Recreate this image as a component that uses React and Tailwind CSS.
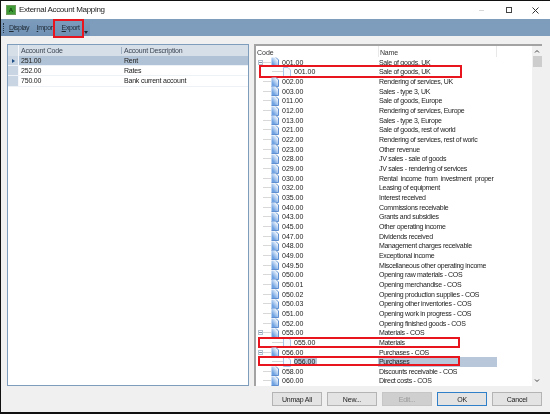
const accounts = [["251.00","Rent",true],["252.00","Rates"],["750.00","Bank current account"]];
const rows = [
["001.00","Sale of goods, UK","p"],["001.00","Sale of goods, UK","c","a"],["002.00","Rendering of services, UK"],["003.00","Sales - type 3, UK"],["011.00","Sale of goods, Europe"],["012.00","Rendering of services, Europe"],["013.00","Sales - type 3, Europe"],["021.00","Sale of goods, rest of world"],["022.00","Rendering of services, rest of worlc"],["023.00","Other revenue"],["028.00","JV sales - sale of goods"],["029.00","JV sales - rendering of services"],["030.00","Rental  income  from  investment  proper"],["032.00","Leasing of equipment"],["035.00","Interest received"],["040.00","Commissions receivable"],["043.00","Grants and subsidies"],["045.00","Other operating income"],["047.00","Dividends received"],["048.00","Management charges receivable"],["049.00","Exceptional income"],["049.50","Miscellaneous other operating income"],["050.00","Opening raw materials - COS"],["050.01","Opening merchandise - COS"],["050.02","Opening production supplies - COS"],["050.03","Opening other inventories - COS"],["051.00","Opening work in progress - COS"],["052.00","Opening finished goods - COS"],["055.00","Materials - COS","p"],["055.00","Materials","c","b"],["056.00","Purchases - COS","p"],["056.00","Purchases","c","c"],["058.00","Discounts receivable - COS"],["060.00","Direct costs - COS"]];

function Doc({ pale }) {
  return (
    <svg width="8" height="10" viewBox="0 0 8 10" className="shrink-0">
      <defs>
        <linearGradient id="docfill" x1="1" y1="0" x2="0" y2="1">
          <stop offset="0.2" stopColor="#f2f7fd" />
          <stop offset="0.75" stopColor="#6fa2e2" />
        </linearGradient>
      </defs>
      {pale ? (
        <path d="M0.5 0.5H5L7.5 3V9.5H0.5Z" fill="#f6f9fd" stroke="#a9c4e6" strokeWidth="1" />
      ) : (
        <>
          <path d="M0.5 0.5H5L7.5 3V9.5H0.5Z" fill="url(#docfill)" />
          <path d="M5 0.5L7.5 3V9.5H0.5" fill="none" stroke="#5f8fd0" strokeWidth="1" />
        </>
      )}
    </svg>
  );
}

function Row({ r }) {
  const [code, name, kind, box] = r;
  const sel = box === "c";
  return (
    <div className="relative flex h-[9.667px] items-center">
      <div className="flex w-[122px] shrink-0 items-center">
        {kind === "c" ? (
          <div className="flex items-center">
            <div className="ml-[16px] w-[11px] border-b border-[#d8d8d8]" />
            <Doc pale />
            <span className={"ml-[3px] " + (sel ? "bg-[#b8c8da] pr-[2px]" : "")}>{code}</span>
          </div>
        ) : (
          <div className="flex items-center">
            {kind === "p" ? (
              <div className="ml-[2px] flex h-[5px] w-[5px] items-center justify-center border border-[#b4c2d2] bg-white">
                <div className="h-px w-[3px] bg-[#8496aa]" />
              </div>
            ) : (
              <div className="ml-[2px] w-[5px]" />
            )}
            <div className="w-[8px] border-b border-[#d8d8d8]" />
            <Doc />
            <span className="ml-[3px]">{code}</span>
          </div>
        )}
      </div>
      <div className={"flex h-full w-[119px] shrink-0 items-center whitespace-pre pl-[1px] tracking-[-0.3px] " + (sel ? "bg-[#b8c8da]" : "")}>{name}</div>
      {box && <div className={"absolute border-2 border-[#e8141e] " + (box === "a" ? "left-[3px] right-[70px] -top-[2px] h-[13px]" : box === "b" ? "left-[2px] right-[72px] -top-[1px] h-[11px]" : "left-[2px] right-[72px] -top-[1px] h-[10px]")} />}
    </div>
  );
}

function Btn({ children, disabled, primary }) {
  return (
    <div className={"flex h-[14px] w-[50px] items-center justify-center border text-[7px] tracking-[-0.2px] " + (primary ? "border-[#2f7fc9] bg-[#e3e3e3]" : disabled ? "border-[#c6c6c6] bg-[#cfcfcf] text-[#9a9a9a]" : "border-[#b4b4b4] bg-[#e3e3e3]")}>{children}</div>
  );
}

export default function App() {
  return (
    <div className="flex h-[414px] w-[550px] flex-col overflow-hidden border-t border-l border-b-2 border-[#111] bg-[#f0f0f0] text-[7px] leading-none text-[#222] [font-family:'Liberation_Sans',sans-serif] blur-[0.25px]">
      <div className="flex h-[18px] shrink-0 items-center bg-white pl-[5px] pr-[11px]">
        <div className="flex h-[10px] w-[10px] items-center justify-center border border-[#6c9a5a] bg-[#3f9b35] text-[6px] font-bold text-[#123d10]">A</div>
        <span className="ml-[3px] text-[8px] tracking-[-0.3px]">External Account Mapping</span>
        <div className="ml-auto flex items-center">
          <div className="mr-[22px] h-px w-[5px] bg-[#d8d8d8]" />
          <div className="mr-[20px] h-[6px] w-[6px] border border-[#444]" />
          <svg width="7" height="7" viewBox="0 0 7 7"><path d="M0.5 0.5L6.5 6.5M6.5 0.5L0.5 6.5" stroke="#333" strokeWidth="1" /></svg>
        </div>
      </div>
      <div className="flex h-[17px] shrink-0 bg-[#7e9dbd]">
        <div className="relative flex h-full w-[89px] items-center rounded-r-[2px] bg-[linear-gradient(#7e9dbd,#6f90b3)] tracking-[-0.4px] text-[#1f2a35]">
          <div className="ml-[2px] h-[10px] border-l border-dotted border-[#26384a]" />
          <span className="ml-[5px]"><u>D</u>isplay</span>
          <span className="ml-[7.5px]"><u>I</u>mport</span>
          <span className="ml-[7.5px]"><u>E</u>xport</span>
          <div className="absolute left-[83px] top-[12px] h-0 w-0 border-x-[2px] border-t-[3px] border-x-transparent border-t-[#1f2a35]" />
          <div className="absolute left-[52px] top-0 h-[19px] w-[31px] border-2 border-[#e8141e]" />
        </div>
      </div>
      <div className="flex min-h-0 flex-1 flex-col pl-[6px] pr-[7px] pt-[8px] pb-[5px]">
        <div className="flex h-[342px] shrink-0">
          <div className="flex w-[242px] shrink-0 flex-col border border-[#7e9dbd] bg-white">
            <div className="flex h-[11px] shrink-0 items-center bg-[#d6dee8] tracking-[-0.2px] text-[#3a4654]">
              <div className="h-full w-[11px] border-r border-[#f5f7fa]" />
              <div className="w-[103px] border-r border-[#9fb0c2] pl-[2px]">Account Code</div>
              <div className="pl-[2px]">Account Description</div>
            </div>
            {accounts.map(([c, d, s]) => (
              <div key={c} className={"flex h-[10.2px] shrink-0 items-center border-b border-[#eef2f6] tracking-[-0.2px] " + (s ? "bg-[#b0c2d5]" : "")}>
                <div className="flex h-full w-[11px] items-center justify-center border-r border-[#f5f7fa] bg-[#c9d5e2]">
                  {s && <div className="h-0 w-0 border-y-[2.5px] border-l-[3px] border-y-transparent border-l-[#1d4f86]" />}
                </div>
                <div className="w-[103px] pl-[2px]">{c}</div>
                <div className="pl-[2px]">{d}</div>
              </div>
            ))}
          </div>
          <div className="ml-[5px] flex w-[288px] shrink-0 border-t-2 border-l-2 border-[#a3a3a3] bg-white">
            <div className="min-w-0 flex-1">
              <div className="flex h-[11px] items-center text-[#333]">
                <div className="h-full w-[122px] pl-[1px] pt-[3px]">Code</div>
                <div className="h-full w-[119px] border-x border-[#e8e8e8] pl-[1px] pt-[3px] tracking-[-0.2px]">Name</div>
              </div>
              <div className="mt-[0.5px]">
                {rows.map((r, i) => <Row key={i} r={r} />)}
              </div>
            </div>
            <div className="flex w-[10px] shrink-0 flex-col items-center bg-[#f0f0f0] pt-[3px] pb-[3px]">
              <svg width="6" height="5" viewBox="0 0 6 5"><path d="M1 3.5L3 1.5L5 3.5" stroke="#444" fill="none" /></svg>
              <div className="mt-[2px] h-[11px] w-[9px] bg-[#cdcdcd]" />
              <svg width="6" height="5" viewBox="0 0 6 5" className="mt-auto"><path d="M1 1.5L3 3.5L5 1.5" stroke="#444" fill="none" /></svg>
            </div>
          </div>
        </div>
        <div className="mt-[6px] flex justify-end gap-[5px] pr-[1px]">
          <Btn>Unmap All</Btn><Btn>New...</Btn><Btn disabled>Edit...</Btn><Btn primary>OK</Btn><Btn>Cancel</Btn>
        </div>
      </div>
    </div>
  );
}
